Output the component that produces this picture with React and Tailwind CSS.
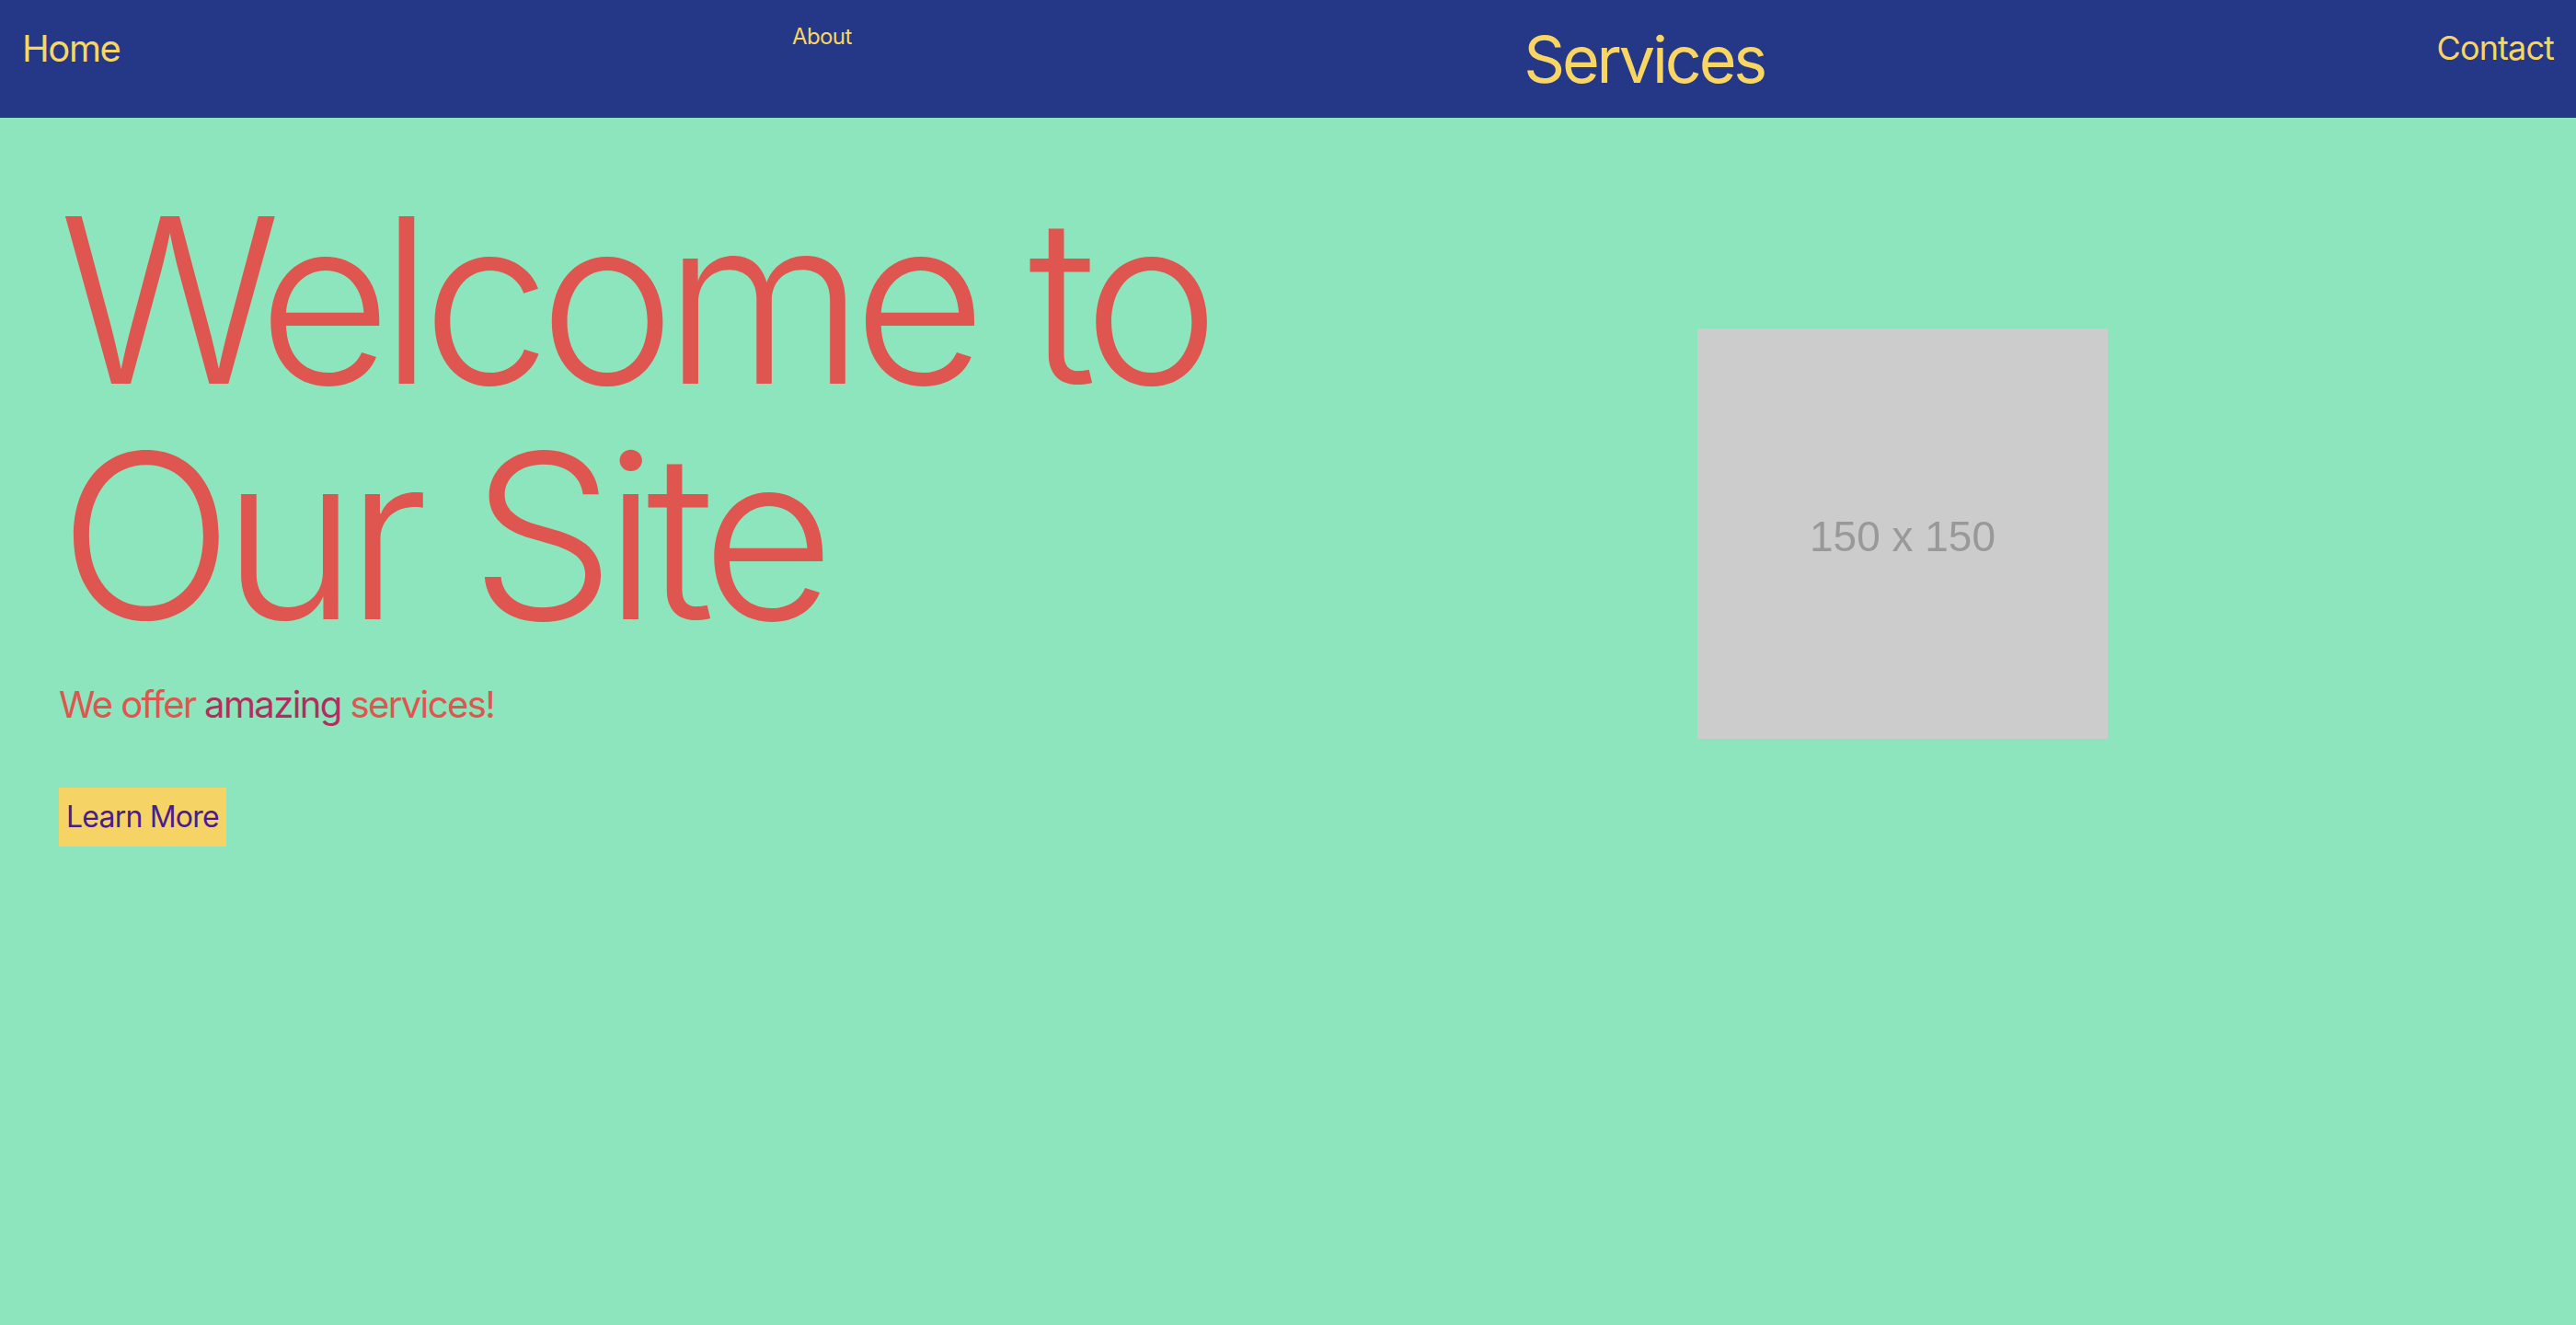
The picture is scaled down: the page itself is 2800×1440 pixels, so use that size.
import React from 'react';

const navLinks = [
  { label: 'Home', cls: 'text-[40px] mt-[33px] tracking-[-0.035em]' },
  { label: 'About', cls: 'text-[24px] mt-[28px] tracking-tight' },
  { label: 'Services', cls: 'text-[70px] mt-[30px] tracking-[-0.045em]' },
  { label: 'Contact', cls: 'text-[36px] mt-[34px] tracking-tight' },
];

export default function App() {
  return (
    <div className="min-h-screen bg-[#8ce5bc] font-['Inter',sans-serif]">
      {/* Top nav */}
      <nav className="h-[128px] bg-[#253887] px-6 flex justify-between items-start">
        {navLinks.map((link) => (
          <a key={link.label} href="#" className={`${link.cls} leading-none text-[#f9d564]`}>
            {link.label}
          </a>
        ))}
      </nav>

      {/* Hero */}
      <main className="px-16 pt-[70px] grid grid-cols-2">
        <div className="flex flex-col items-start">
          <h1 className="text-[250px] leading-[256px] font-light tracking-[-0.05em] text-[#df5550]">
            <span className="block whitespace-nowrap">Welcome to</span>
            <span className="block whitespace-nowrap">Our Site</span>
          </h1>
          <p className="mt-[26px] text-[40px] leading-[60px] text-[#df5550] tracking-[-0.04em]">
            We offer <span className="text-[#b12f5e]">amazing</span> services!
          </p>
          <button className="mt-[60px] bg-[#f6d365] text-[#4b1c8f] text-[32px] leading-[48px] px-2 py-2 tracking-tight">
            Learn More
          </button>
        </div>

        <div className="flex justify-center">
          <div className="mt-[159px] w-[446px] h-[446px] bg-[#cccccc] flex items-center justify-center">
            <span className="mt-[6px] font-['Liberation_Sans',Arial,sans-serif] text-[46px] text-[#999999] blur-[0.6px]">
              150 x 150
            </span>
          </div>
        </div>
      </main>
    </div>
  );
}
